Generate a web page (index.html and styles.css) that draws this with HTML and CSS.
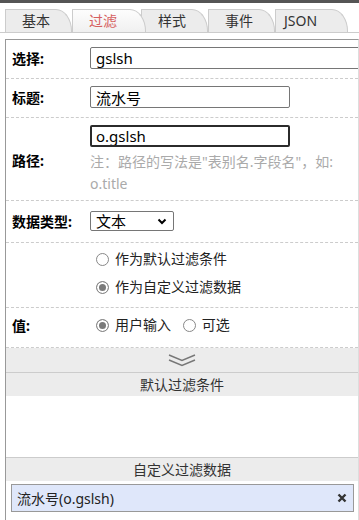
FILE: index.html
```html
<!DOCTYPE html>
<html lang="zh-CN">
<head>
    <meta charset="UTF-8">
    <meta name="viewport" content="width=device-width, initial-scale=1.0">
    <title>过滤设置</title>
    <link rel="stylesheet" href="styles.css">
</head>
<body>
    <div class="topbar"></div>

    <!-- Tabs -->
    <ul class="tabs">
        <li class="tab">基本</li>
        <li class="tab active">过滤</li>
        <li class="tab">样式</li>
        <li class="tab">事件</li>
        <li class="tab tab-json">JSON</li>
    </ul>

    <div class="panel">
        <div class="row">
            <label class="row-label">选择:</label>
            <div class="row-field"><input class="text-input wide" type="text" value="gslsh"></div>
        </div>

        <div class="row">
            <label class="row-label">标题:</label>
            <div class="row-field"><input class="text-input" type="text" value="流水号"></div>
        </div>

        <div class="row row-path">
            <label class="row-label">路径:</label>
            <div class="row-field">
                <input class="text-input focused" type="text" value="o.gslsh">
                <p class="hint">注：路径的写法是"表别名.字段名"，如: o.title</p>
            </div>
        </div>

        <div class="row row-select">
            <label class="row-label">数据类型:</label>
            <div class="row-field">
                <span class="select-wrap">
                    <select class="select">
                        <option>文本</option>
                    </select>
                    <svg class="select-arrow" width="10" height="7" viewBox="0 0 10 7">
                        <path d="M1.5 1.5 L5 5 L8.5 1.5" fill="none" stroke="#000" stroke-width="2"/>
                    </svg>
                </span>
            </div>
        </div>

        <div class="row row-options">
            <span class="row-label"></span>
            <div class="row-field">
                <label class="option"><input class="radio" type="radio" name="mode">作为默认过滤条件</label>
                <label class="option"><input class="radio" type="radio" name="mode" checked>作为自定义过滤数据</label>
            </div>
        </div>

        <div class="row row-value">
            <label class="row-label">值:</label>
            <div class="row-field">
                <label class="option inline"><input class="radio" type="radio" name="value" checked>用户输入</label>
                <label class="option inline"><input class="radio" type="radio" name="value">可选</label>
            </div>
        </div>

        <!-- Collapse toggle -->
        <div class="toggle-bar">
            <svg width="28" height="13" viewBox="0 0 28 13">
                <path d="M1 1 L14 6.5 L27 1" fill="none" stroke="#777" stroke-width="1.4"/>
                <path d="M1 6 L14 11.5 L27 6" fill="none" stroke="#777" stroke-width="1.4"/>
            </svg>
        </div>

        <div class="section-title">默认过滤条件</div>
        <div class="section-body"></div>

        <div class="section-title">自定义过滤数据</div>
        <div class="item">
            <span>流水号(o.gslsh)</span>
            <svg width="10" height="10" viewBox="0 0 10 10">
                <path d="M1.5 1.5 L8.5 8.5 M8.5 1.5 L1.5 8.5" stroke="#333" stroke-width="2.4"/>
            </svg>
        </div>
    </div>
</body>
</html>
```

FILE: styles.css
```css
body {
    margin: 0;
    font-family: "Noto Sans", "Noto Sans CJK SC", sans-serif;
    font-size: 14px;
    color: #222;
    background: #fff;
    overflow: hidden;
}
.topbar {
    height: 3px;
    background: #555;
}
.tabs {
    display: flex;
    list-style: none;
    margin: 0;
    padding: 6px 0 0 5px;
    height: 23px;
    border-bottom: 1px solid #ccc;
}
.tab {
    box-sizing: border-box;
    width: 67px;
    height: 23px;
    padding-left: 16px;
    border: 1px solid #ccc;
    border-bottom: none;
    border-top-right-radius: 16px 22px;
    background: #ececec;
    color: #333;
    line-height: 22px;
}
.tab.active {
    position: relative;
    z-index: 1;
    width: 74px;
    margin-right: -5px;
    background: linear-gradient(#fdfdfd, #f0f0f0);
    color: #d65f5f;
}
.tab-json {
    width: 73px;
    padding-left: 8px;
}
.panel {
    margin: 6px 0 0 5px;
    min-height: 500px;
    border-top: 1px solid #999;
    border-left: 1px solid #999;
    border-right: 1px solid #ddd;
    overflow: hidden;
}
.row {
    display: grid;
    grid-template-columns: 78px minmax(0, 1fr);
    align-items: center;
    padding: 7px 6px 9px;
    border-bottom: 1px dashed #ccc;
}
.row-label {
    font-weight: bold;
    color: #000;
}
.row-path {
    padding-bottom: 5px;
}
.row-select {
    padding: 9px 6px 11px;
}
.row-options {
    padding: 2px 6px 6px;
}
.row-value {
    padding: 3px 6px 8px;
}
.text-input {
    box-sizing: border-box;
    width: 200px;
    height: 22px;
    padding: 0 5px;
    border: 1px solid #767676;
    border-radius: 2px;
    font-family: inherit;
    font-size: 15px;
    color: #000;
    outline: none;
}
.text-input.wide {
    width: 300px;
}
.text-input.focused {
    border: 2px solid #2b2b2b;
    padding: 0 4px;
}
.hint {
    margin: 4px 0 0;
    line-height: 22px;
    color: #aaa;
}
.select-wrap {
    position: relative;
    display: inline-block;
    vertical-align: middle;
}
.select {
    appearance: none;
    box-sizing: border-box;
    width: 84px;
    height: 20px;
    padding: 0 0 0 5px;
    border: 1px solid #767676;
    border-radius: 2px;
    background: #fff;
    font-family: inherit;
    font-size: 15px;
    line-height: 18px;
    color: #000;
}
.select-arrow {
    position: absolute;
    right: 7px;
    top: 7px;
}
.option {
    display: flex;
    align-items: center;
    line-height: 28px;
    color: #222;
}
.option.inline {
    display: inline-flex;
    margin-right: 2px;
}
.radio {
    appearance: none;
    box-sizing: border-box;
    width: 13px;
    height: 13px;
    margin: 0 6px;
    border: 1px solid #888;
    border-radius: 50%;
    background: #fff;
}
.radio:checked {
    background: #7a7a7a;
    box-shadow: inset 0 0 0 2px #fff;
}
.toggle-bar {
    display: flex;
    align-items: center;
    justify-content: center;
    height: 24px;
    background: #ececec;
}
.section-title {
    height: 23px;
    line-height: 23px;
    border-top: 1px solid #ccc;
    background: #ececec;
    text-align: center;
    color: #333;
}
.section-body {
    height: 61px;
}
.item {
    display: flex;
    align-items: center;
    justify-content: space-between;
    box-sizing: border-box;
    height: 28px;
    margin: 3px 4px 0 5px;
    padding: 0 6px 0 5px;
    border: 1px solid #999;
    background: #dfe7fa;
    color: #222;
}
```
